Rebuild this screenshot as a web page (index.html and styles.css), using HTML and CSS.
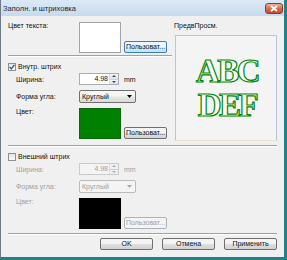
FILE: index.html
```html
<!DOCTYPE html>
<html lang="ru">
<head>
  <meta charset="UTF-8">
  <title>Заполн. и штриховка</title>
  <link rel="stylesheet" href="styles.css">
</head>
<body>
  <div class="window">
    <div class="titlebar">
      <span class="title">Заполн. и штриховка</span>
      <span class="close">
        <svg width="8" height="7" viewBox="0 0 8 7"><path d="M1 1 L7 6 M7 1 L1 6" stroke="#fff" stroke-width="1.8"/></svg>
      </span>
    </div>

    <div class="content">
      <div class="top">
        <div class="left">
          <div class="row swatch-row">
            <span class="label">Цвет текста:</span>
            <span class="swatch white"></span>
            <button class="btn small default">Пользоват...</button>
          </div>

          <div class="sep"></div>

          <div class="group">
            <label class="check">
              <span class="box"><svg width="6" height="6" viewBox="0 0 6 6"><path d="M0.6 3 L2.3 4.9 L5.4 0.8" fill="none" stroke="#3a5a96" stroke-width="1.4"/></svg></span>
              Внутр. штрих
            </label>
            <div class="row field">
              <span class="label">Ширина:</span>
              <span class="spin">
                <span class="spin-val">4.98</span>
                <span class="spin-btns">
                  <span class="spin-half"><svg width="4" height="2" viewBox="0 0 4 2"><path d="M0 2 L2 0 L4 2 Z" fill="#445"/></svg></span>
                  <span class="spin-half"><svg width="4" height="2" viewBox="0 0 4 2"><path d="M0 0 L2 2 L4 0 Z" fill="#445"/></svg></span>
                </span>
              </span>
              <span class="unit">mm</span>
            </div>
            <div class="row field shape-row">
              <span class="label">Форма угла:</span>
              <span class="select">
                <span class="select-val">Круглый</span>
                <svg width="5" height="3" viewBox="0 0 5 3"><path d="M0 0 L5 0 L2.5 3 Z" fill="#000"/></svg>
              </span>
            </div>
            <div class="row field swatch-row color-row">
              <span class="label">Цвет:</span>
              <span class="swatch green"></span>
              <button class="btn small">Пользоват...</button>
            </div>
          </div>
        </div>

        <div class="preview-col">
          <div class="preview-label">ПредвПросм.</div>
          <div class="preview-box">
            <div class="pv-line">ABC</div>
            <div class="pv-line">DEF</div>
          </div>
        </div>
      </div>

      <div class="sep full"></div>

      <div class="group disabled">
        <label class="check">
          <span class="box"></span>
          Внешний штрих
        </label>
        <div class="row field">
          <span class="label">Ширина:</span>
          <span class="spin">
            <span class="spin-val">4.98</span>
            <span class="spin-btns">
              <span class="spin-half"><svg width="4" height="2" viewBox="0 0 4 2"><path d="M0 2 L2 0 L4 2 Z" fill="#aaa"/></svg></span>
              <span class="spin-half"><svg width="4" height="2" viewBox="0 0 4 2"><path d="M0 0 L2 2 L4 0 Z" fill="#aaa"/></svg></span>
            </span>
          </span>
          <span class="unit">mm</span>
        </div>
        <div class="row field shape-row">
          <span class="label">Форма угла:</span>
          <span class="select">
            <span class="select-val">Круглый</span>
            <svg width="5" height="3" viewBox="0 0 5 3"><path d="M0 0 L5 0 L2.5 3 Z" fill="#a8a8a8"/></svg>
          </span>
        </div>
        <div class="row field swatch-row color-row">
          <span class="label">Цвет:</span>
          <span class="swatch black"></span>
          <button class="btn small">Пользоват...</button>
        </div>
      </div>

      <div class="sep full bottom"></div>

      <div class="actions">
        <button class="btn">OK</button>
        <button class="btn">Отмена</button>
        <button class="btn">Применить</button>
      </div>
    </div>
  </div>
</body>
</html>
```

FILE: styles.css
```css
body {
  margin: 0;
  font-family: 'Liberation Sans', Arial, sans-serif;
  font-size: 7px;
  color: #111;
}

.window {
  width: 287px;
  height: 260px;
  box-sizing: border-box;
  background: #f0f0f0;
  border-left: 1px solid #6f7b86;
  border-right: 3px solid #23808b;
  border-bottom: 3px solid #23808b;
  display: flex;
  flex-direction: column;
}

.titlebar {
  height: 16px;
  flex: none;
  display: flex;
  align-items: center;
  padding-left: 2px;
  background: linear-gradient(#dce9f6, #c6daef);
}

.title {
  font-size: 7.5px;
  color: #1b2636;
}

.close {
  margin-left: auto;
  margin-right: 1px;
  width: 18px;
  height: 11px;
  box-sizing: border-box;
  border: 1px solid #8b3b2b;
  border-radius: 3px;
  background: linear-gradient(#eab49c, #d66c50 50%, #c24c32);
  display: flex;
  align-items: center;
  justify-content: center;
}

.content {
  padding: 6px 7px 0 7px;
}

.top {
  display: flex;
  gap: 2px;
}

.left {
  width: 164px;
}

.row {
  display: flex;
  align-items: center;
}

.label {
  width: 71px;
  flex: none;
}

.swatch-row {
  align-items: flex-start;
}

.swatch-row .label {
  line-height: 7px;
}

.field {
  padding-left: 8px;
}

.field .label {
  width: 63px;
}

.swatch {
  width: 42px;
  height: 31px;
  box-sizing: border-box;
  flex: none;
}

.swatch.white {
  background: #fff;
  border: 1px solid #a3a3a3;
}

.swatch.green {
  background: #008000;
  border: 1px solid #0a6a0a;
}

.swatch.black {
  background: #000;
}

.btn {
  font-family: inherit;
  font-size: 7px;
  color: #111;
  padding: 0;
  width: 53px;
  height: 12px;
  box-sizing: border-box;
  border: 1px solid #707070;
  border-radius: 2px;
  background: linear-gradient(#f4f4f4 45%, #dedede 55%, #d2d2d2);
  line-height: 10px;
}

.btn.small {
  width: 43px;
  margin-left: 3px;
  align-self: flex-end;
}

.btn.default {
  border-color: #3c7fb1;
  background: linear-gradient(#eaf6fd 45%, #d3ecf9 55%, #bfe3f7);
}

.sep {
  height: 0;
  border-top: 1px solid #a0a0a0;
  border-bottom: 1px solid #fff;
  margin-top: 2px;
}

.sep.full {
  margin-top: 4px;
}

.check {
  display: flex;
  align-items: center;
  gap: 2px;
  height: 9px;
  margin-top: 5px;
}

.box {
  width: 8px;
  height: 8px;
  box-sizing: border-box;
  border: 1px solid #8e8f8f;
  background: linear-gradient(#e4e4e4, #fbfbfb);
  display: flex;
  align-items: center;
  justify-content: center;
}

.group .field {
  margin-top: 2px;
  height: 12px;
}

.group .shape-row {
  margin-top: 5px;
  height: 13px;
}

.group .color-row {
  margin-top: 5px;
  height: auto;
}

.spin {
  width: 40px;
  height: 12px;
  box-sizing: border-box;
  border: 1px solid #abadb3;
  background: #fff;
  display: flex;
}

.spin-val {
  flex: 1;
  text-align: right;
  padding-right: 1px;
  line-height: 10px;
}

.spin-btns {
  width: 8px;
  display: flex;
  flex-direction: column;
  border-left: 1px solid #d5dde6;
}

.spin-half {
  flex: 1;
  display: flex;
  align-items: center;
  justify-content: center;
  background: linear-gradient(#f1f5fa, #dbe4ee);
}

.spin-half + .spin-half {
  border-top: 1px solid #c8d2dd;
}

.unit {
  margin-left: 5px;
}

.select {
  width: 57px;
  height: 13px;
  box-sizing: border-box;
  border: 1px solid #707070;
  border-radius: 2px;
  background: linear-gradient(#f6f6f6 45%, #e4e4e4 55%, #dadada);
  display: flex;
  align-items: center;
  padding: 0 3px 0 2px;
}

.select-val {
  flex: 1;
}

.preview-col {
  width: 103px;
}

.preview-label {
  line-height: 7px;
  margin-bottom: 6px;
}

.preview-box {
  margin-left: 1px;
  height: 106px;
  box-sizing: border-box;
  border: 1px solid #b7c7d8;
  border-bottom-color: #e8e4c8;
  background: #f4f4f4;
  display: flex;
  flex-direction: column;
  align-items: center;
  justify-content: center;
}

.pv-line {
  font-family: 'Liberation Serif', 'Times New Roman', serif;
  font-weight: bold;
  font-size: 33px;
  line-height: 34px;
  letter-spacing: -2.5px;
  padding-left: 2px;
  color: #ffffff;
  -webkit-text-stroke: 1.2px #008800;
}

.disabled .check,
.disabled .label,
.disabled .unit,
.disabled .spin-val,
.disabled .select-val,
.disabled .btn {
  color: #a0a0a0;
}

.disabled .check {
  color: #111;
}

.disabled .spin {
  border-color: #c9cbce;
  background: #f4f4f4;
}

.disabled .spin-half {
  background: #f0f0f0;
}

.disabled .select {
  border-color: #b8bcc0;
  background: #f4f4f4;
}

.disabled .btn {
  border-color: #adb2b5;
  background: #f4f4f4;
}

.actions {
  display: flex;
  justify-content: flex-end;
  gap: 9px;
  margin-top: 3px;
}
```
